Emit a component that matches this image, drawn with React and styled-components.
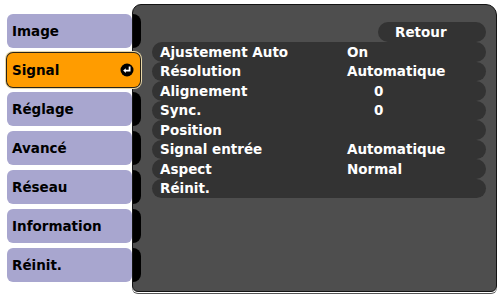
import React from 'react'
import styled, { createGlobalStyle } from 'styled-components'

const Global = createGlobalStyle`
    html, body {
        margin: 0;
        padding: 0;
        background: #ffffff;
    }
    body {
        font-family: "DejaVu Sans", Verdana, sans-serif;
    }
`

const Screen = styled.div`
    width: 498px;
    height: 295px;
    box-sizing: border-box;
    padding: 4px 1px 3px 7px;
    display: flex;
`

const TabColumn = styled.ul`
    list-style: none;
    margin: 0;
    padding: 10px 0 0 0;
    width: 125px;
    display: flex;
    flex-direction: column;
    gap: 5px;
    position: relative;
    z-index: 1;
`

const Tab = styled.li`
    height: 34px;
    box-sizing: border-box;
    display: flex;
    align-items: center;
    justify-content: space-between;
    padding: 0 6px 0 5px;
    border-radius: 6px;
    font-size: 13.5px;
    font-weight: bold;
    color: #000;
    background: ${p => (p.$active ? '#ff9c00' : '#a8a6cf')};
    margin-right: ${p => (p.$active ? '-8px' : '0')};
    box-shadow: ${p => (p.$active ? '0 0 0 1px #2a2418, 0 0 0 2px #e8d7a8' : 'none')};
`

const Panel = styled.div`
    flex: 1;
    display: flex;
    background: #4e4e4e;
    border: 1px solid #141414;
    border-radius: 9px 11px 6px 6px;
    box-shadow: 0 1px 0 #ffffff, 0 2px 0 #555;
`

const Rail = styled.div`
    width: 8px;
    padding-top: 9px;
    display: flex;
    flex-direction: column;
    gap: 5px;
`

const Bump = styled.div`
    height: 34px;
    background: ${p => (p.$hidden ? 'transparent' : '#000')};
    border-radius: 0 9px 9px 0;
`

const Content = styled.div`
    flex: 1;
    padding: 17px 10px 0 11px;
    display: flex;
    flex-direction: column;
`

const BackButton = styled.div`
    align-self: flex-end;
    width: 108px;
    height: 20px;
    box-sizing: border-box;
    padding-left: 17px;
    border-radius: 10px;
    background: #333333;
    color: #fff;
    font-size: 13.5px;
    font-weight: bold;
    line-height: 20px;
`

const Rows = styled.ul`
    list-style: none;
    margin: 0;
    padding: 0;
`

const Row = styled.li`
    height: 19.5px;
    display: flex;
    align-items: center;
    padding-left: 8px;
    border-radius: 10px;
    background: #333333;
    color: #fff;
    font-size: 13.5px;
    font-weight: bold;
`

const Label = styled.span`
    width: 187px;
    white-space: nowrap;
`

const Value = styled.span`
    padding-left: ${p => (p.$indent ? '27px' : '0')};
`

function EnterIcon() {
    return (
        <svg width="14" height="14" viewBox="0 0 14 14">
            <circle cx="7" cy="7" r="6.5" fill="#000" />
            <path d="M9.6 3.4 V7.6 H5" stroke="#fff" strokeWidth="1.8" fill="none" />
            <path d="M3.2 7.6 L5.8 5.2 V10 Z" fill="#fff" />
        </svg>
    )
}

const tabs = ['Image', 'Signal', 'Réglage', 'Avancé', 'Réseau', 'Information', 'Réinit.']
const actif = 1

const lignes = [
    { label: 'Ajustement Auto', value: 'On' },
    { label: 'Résolution', value: 'Automatique' },
    { label: 'Alignement', value: '0', indent: true },
    { label: 'Sync.', value: '0', indent: true },
    { label: 'Position', value: '' },
    { label: 'Signal entrée', value: 'Automatique' },
    { label: 'Aspect', value: 'Normal' },
    { label: 'Réinit.', value: '' },
]

export default function App() {
    return (
        <>
            <Global />
            <Screen>
                <TabColumn>
                    {tabs.map((t, i) => (
                        <Tab key={t} $active={i === actif}>
                            {t}
                            {i === actif && <EnterIcon />}
                        </Tab>
                    ))}
                </TabColumn>
                <Panel>
                    <Rail>
                        {tabs.map((t, i) => (
                            <Bump key={t} $hidden={i === actif} />
                        ))}
                    </Rail>
                    <Content>
                        <BackButton>Retour</BackButton>
                        <Rows>
                            {lignes.map(l => (
                                <Row key={l.label}>
                                    <Label>{l.label}</Label>
                                    <Value $indent={l.indent}>{l.value}</Value>
                                </Row>
                            ))}
                        </Rows>
                    </Content>
                </Panel>
            </Screen>
        </>
    )
}
